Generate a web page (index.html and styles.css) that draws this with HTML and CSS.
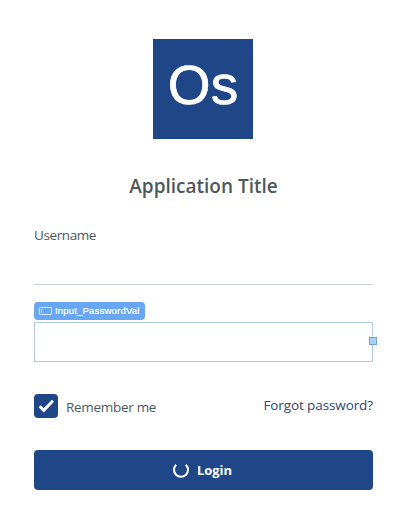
FILE: index.html
```
<!DOCTYPE html>
<html lang="en">
<head>
    <meta charset="UTF-8">
    <meta name="viewport" content="width=device-width, initial-scale=1.0">
    <title>Login</title>
    <link rel="stylesheet" href="styles.css">
</head>
<body>
    <div class="login-screen">
        <div class="logo"><span class="logo-text">Os</span></div>
        <h1 class="app-title"><span class="app-title-text">Application Title</span></h1>

        <form class="login-form">
            <div class="username">
                <label class="username-label" for="username"><span class="username-text">Username</span></label>
                <input class="username-input" id="username" type="text">
            </div>

            <div class="widget-tag">
                <svg class="widget-icon" width="13" height="8" viewBox="0 0 13 8">
                    <rect x="0.5" y="0.5" width="12" height="7" rx="0.5" fill="none" stroke="#d9e9fd"/>
                    <path d="M2.5 2v4" stroke="#d9e9fd"/>
                </svg>
                <span class="widget-name">Input_PasswordVal</span>
            </div>
            <div class="password">
                <input class="password-input" type="password" aria-label="Password">
                <span class="resize-handle"></span>
            </div>

            <div class="options">
                <div class="remember">
                    <span class="checkbox">
                        <svg width="24" height="24" viewBox="0 0 24 24">
                            <path d="M5.6 12.2l4.2 4.2L19 6.8" fill="none" stroke="#fff" stroke-width="3"/>
                        </svg>
                    </span>
                    <span class="remember-text">Remember me</span>
                </div>
                <a class="forgot">Forgot password?</a>
            </div>

            <button class="login-button" type="button">
                <svg class="spinner" width="16" height="16" viewBox="0 0 16 16">
                    <path d="M3.2 2.7a7 7 0 1 0 9.6 0" fill="none" stroke="#fff" stroke-width="2"/>
                </svg>
                <span class="login-text">Login</span>
            </button>
        </form>
    </div>
</body>
</html>
```

FILE: styles.css
```
* {
    box-sizing: border-box;
}
body {
    margin: 0;
    background: #fff;
    color: #4f575e;
    font-family: 'Open Sans', 'Noto Sans', sans-serif;
    font-size: 14px;
}
.login-screen {
    width: 404px;
    height: 505px;
    padding: 39px 31px 0 34px;
    overflow: hidden;
}
.logo {
    width: 100px;
    height: 100px;
    margin-left: 119px;
    background: #1f4788;
    color: #fff;
    font-family: 'Liberation Sans', Arial, sans-serif;
    font-size: 55px;
    line-height: 92px;
    text-align: center;
    -webkit-text-stroke: 0.7px #fff;
}
.app-title {
    margin: 32px 0 0;
    font-size: 19px;
    font-weight: 600;
    line-height: 30px;
    text-align: center;
    white-space: nowrap;
}
.username {
    margin-top: 25px;
    height: 59px;
    border-bottom: 1px solid #ced4da;
}
.username-label {
    display: block;
    line-height: 18px;
    font-size: 13.5px;
    letter-spacing: -0.4px;
}
.username-input {
    display: block;
    width: 100%;
    height: 38px;
    padding: 0;
    border: 0;
    outline: 0;
    background: transparent;
}
.widget-tag {
    display: flex;
    align-items: center;
    gap: 4px;
    width: 111px;
    height: 18px;
    margin-top: 17px;
    padding-left: 5px;
    border-radius: 4px;
    background: #68a6f6;
    color: #fff;
    font-family: 'Liberation Sans', Arial, sans-serif;
    font-size: 9.6px;
    line-height: 16px;
    white-space: nowrap;
    -webkit-text-stroke: 0.2px #fff;
}
.widget-name {
    margin-left: -1px;
    letter-spacing: 0.15px;
}
.password {
    position: relative;
    height: 40px;
    margin-top: 2px;
}
.password-input {
    display: block;
    width: 100%;
    height: 40px;
    border: 1px solid #b0cbe4;
    outline: 0;
    background: #fff;
}
.resize-handle {
    position: absolute;
    top: 15px;
    right: -4px;
    width: 8px;
    height: 8px;
    border: 1px solid #6fa0d6;
    background: #abcefa;
}
.options {
    display: flex;
    justify-content: space-between;
    height: 24px;
    margin-top: 32px;
}
.remember {
    display: flex;
    gap: 8px;
    line-height: 26px;
    font-size: 13.5px;
    letter-spacing: -0.3px;
}
.checkbox {
    width: 24px;
    height: 24px;
    border-radius: 4px;
    background: #1f4788;
}
.checkbox svg {
    display: block;
}
.forgot {
    color: #2c4778;
    line-height: 22px;
    font-size: 13.5px;
    letter-spacing: -0.1px;
}
.login-button {
    display: flex;
    align-items: center;
    justify-content: center;
    gap: 8px;
    width: 100%;
    height: 40px;
    margin-top: 32px;
    padding: 0 2px 0 0;
    border: 0;
    border-radius: 4px;
    background: #1f4788;
    color: #fff;
    font-family: inherit;
    font-size: 13px;
    font-weight: 700;
}
```
